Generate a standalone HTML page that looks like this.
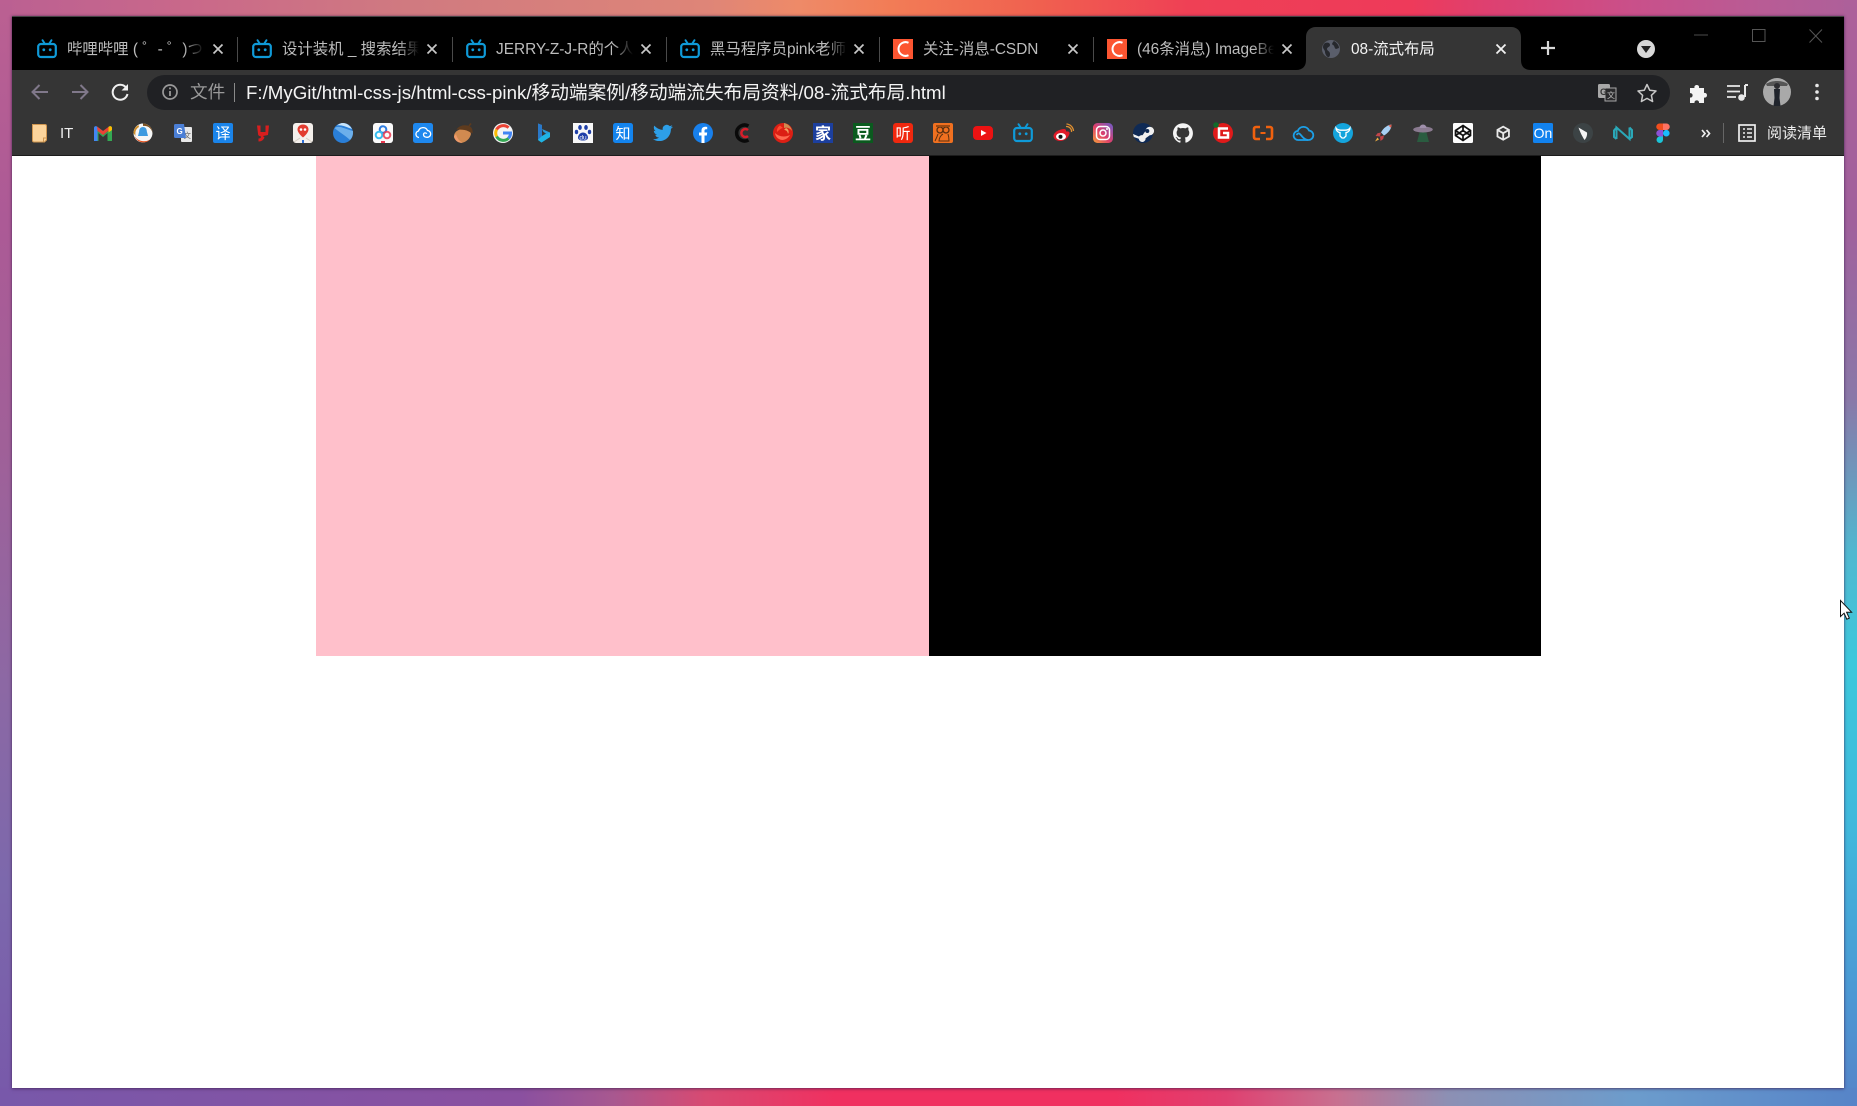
<!DOCTYPE html>
<html><head><meta charset="utf-8"><style>
html,body{margin:0;padding:0;width:1857px;height:1106px;overflow:hidden;background:#8a5aa5}
body{position:relative;font-family:"Liberation Sans","Noto Sans CJK SC",sans-serif}
.a{position:absolute}
#top{left:0;top:0;width:1857px;height:18px;background:linear-gradient(90deg,#bb6092 0,#c9688a 10%,#d07a80 22%,#de8578 38%,#ee8a68 43%,#f27c56 48%,#f0604f 56%,#ef4055 64%,#ee3a5a 76%,#de4070 80%,#c9508a 88%,#b85c95 95%,#ad609a 100%)}
#left{left:0;top:0;width:12px;height:1106px;background:linear-gradient(180deg,#bb6092 0,#ac5a96 20%,#a06098 40%,#8c68a4 62%,#7c68ac 80%,#7858aa 100%)}
#right{left:1844px;top:0;width:13px;height:1106px;background:linear-gradient(180deg,#ad609a 0,#a0609c 20%,#8a78a8 36%,#50b8d0 50%,#3cc8dc 60%,#40b8dc 75%,#4c98d4 90%,#5684c8 100%)}
#bot{left:0;top:1088px;width:1857px;height:18px;background:linear-gradient(90deg,#7858aa 0,#8a50a0 28%,#a85890 33%,#d84a72 38%,#f03060 45%,#f03060 60%,#e04070 66%,#c87090 72%,#8c90b4 78%,#6c9ccc 88%,#5684c8 100%)}
#win{left:12px;top:16px;width:1832px;height:1072px;background:#fff;box-shadow:0 1px 3px rgba(60,30,80,.55),0 0 2px rgba(60,30,80,.5)}
#tabs{left:12px;top:16px;width:1832px;height:54px;background:#000;border-top:1px solid #444;box-sizing:border-box}
#bar{left:12px;top:70px;width:1832px;height:85px;background:#353535}
#line{left:12px;top:155px;width:1832px;height:1px;background:#1c1c1c}
#omni{left:147px;top:75px;width:1523px;height:35px;border-radius:18px;background:#202124}
#pink{left:316px;top:156px;width:613px;height:500px;background:#ffc0cb}
#black{left:929px;top:156px;width:612px;height:500px;background:#000}
.t{top:39px;height:22px;line-height:22px;font-size:15.4px;color:#bdbdbd;white-space:nowrap;overflow:hidden;-webkit-mask-image:linear-gradient(90deg,#000 85%,transparent 100%);mask-image:linear-gradient(90deg,#000 85%,transparent 100%)}
.sep{top:37px;width:1px;height:25px;background:#4a4a4a}
#url{left:246px;top:80px;height:25px;line-height:25px;font-size:18.7px;color:#f4f4f4;white-space:nowrap}
#file{left:190px;top:80px;height:25px;line-height:25px;font-size:17.6px;color:#9a9a9a;white-space:nowrap}
#it{left:60px;top:123px;font-size:15px;line-height:22px;color:#eee}
#read{left:1767px;top:123px;font-size:15px;line-height:22px;color:#eee;white-space:nowrap}
svg{position:absolute;left:0;top:0;overflow:visible}
svg text{font-family:"Liberation Sans","Noto Sans CJK SC",sans-serif}
</style></head><body>
<div class="a" id="top"></div><div class="a" id="left"></div><div class="a" id="right"></div><div class="a" id="bot"></div>
<div class="a" id="win"></div>
<div class="a" id="tabs"></div>
<div class="a" id="bar"></div><div class="a" id="line"></div>
<svg class="a" style="left:1296px;top:27px" width="235" height="43" viewBox="0 0 235 43"><path d="M0 43C7 43 10 39 10 33V10C10 4 14 0 20 0H215C221 0 225 4 225 10V33C225 39 228 43 235 43Z" fill="#353535"/></svg>
<div class="a" id="omni"></div>
<div class="a" id="pink"></div><div class="a" id="black"></div>

<div class="a t" style="left:67px;width:137px">哔哩哔哩 ( ゜- ゜)つロ 干杯</div>
<div class="a t" style="left:282px;width:137px">设计装机 _ 搜索结果</div>
<div class="a t" style="left:496px;width:137px">JERRY-Z-J-R的个人空间</div>
<div class="a t" style="left:710px;width:137px">黑马程序员pink老师</div>
<div class="a t" style="left:923px;width:137px;-webkit-mask-image:none;mask-image:none">关注-消息-CSDN</div>
<div class="a t" style="left:1137px;width:137px">(46条消息) ImageBed</div>
<div class="a t" style="left:1351px;width:137px;color:#f4f4f4;-webkit-mask-image:none;mask-image:none">08-流式布局</div>
<div class="a sep" style="left:237px"></div><div class="a sep" style="left:452px"></div><div class="a sep" style="left:666px"></div><div class="a sep" style="left:879px"></div><div class="a sep" style="left:1093px"></div>

<div class="a" id="file">文件</div>
<div class="a" style="left:234px;top:83px;width:1px;height:19px;background:#8a8a8a"></div>
<div class="a" id="url">F:/MyGit/html-css-js/html-css-pink/移动端案例/移动端流失布局资料/08-流式布局.html</div>
<div class="a" id="it">IT</div>
<div class="a" id="read">阅读清单</div>

<svg width="1857" height="1106" viewBox="0 0 1857 1106">
<defs>
<g id="bili"><rect x="1.2" y="5" width="17.6" height="13" rx="2.8" fill="none" stroke="#0f9ad8" stroke-width="2.2"/><path d="M5.5 1.2 8 5M14.5 1.2 12 5" stroke="#0f9ad8" stroke-width="1.9" stroke-linecap="round"/><circle cx="6.8" cy="10.8" r="1.4" fill="#0f9ad8"/><circle cx="13.2" cy="10.8" r="1.4" fill="#0f9ad8"/></g>
<g id="csdn"><rect width="20" height="20" fill="#fc5531"/><path d="M15.5 3.800A7 7 0 0 0 5.500 10a7 7 0 0 0 10 6.200" fill="none" stroke="#fff" stroke-width="2"/></g>
<g id="x"><path d="M-4.5-4.500 4.500 4.500M4.500-4.500-4.500 4.500" stroke="#c8c8c8" stroke-width="1.700" fill="none"/></g>
</defs>
<use href="#bili" x="37" y="39"/><use href="#bili" x="252" y="39"/><use href="#bili" x="466" y="39"/><use href="#bili" x="680" y="39"/>
<use href="#csdn" x="893" y="39"/><use href="#csdn" x="1107" y="39"/>
<use href="#x" x="218" y="49"/><use href="#x" x="432" y="49"/><use href="#x" x="646" y="49"/><use href="#x" x="859" y="49"/><use href="#x" x="1073" y="49"/><use href="#x" x="1287" y="49"/>
<path d="M1496.500 44.500 1505.500 53.500M1505.500 44.500 1496.500 53.500" stroke="#f2f2f2" stroke-width="1.800"/>
<circle cx="1331" cy="49" r="9" fill="#5a5e6b"/><path d="M1325 43c3-1 5 0 5 2s-3 2-3 4 3 2 3 5-1 3-2 3-3-3-3-5-2-3-2-5 1-3 2-4zM1334 41c2 1 5 4 5 7l-3 1c-2-1-1-3-3-4s0-3 1-4z" fill="#26282d"/>
<path d="M1548 41v14M1541 48h14" stroke="#d8d8d8" stroke-width="2.200"/>
<circle cx="1646" cy="49" r="9" fill="#d8d8d8"/><path d="M1641 46h10l-5 7z" fill="#222"/>
<path d="M1694 35h14" stroke="#4c4c4c" stroke-width="1"/>
<rect x="1752.500" y="29.500" width="12.500" height="12" fill="none" stroke="#555" stroke-width="1"/>
<path d="M1809.500 29.500 1822 42.500M1822 29.500 1809.500 42.500" stroke="#555" stroke-width="1" fill="none"/>
<path d="M48 92H33M39.500 85 32.500 92l7 7" fill="none" stroke="#80788a" stroke-width="2"/>
<path d="M72 92H87M80.500 85l7 7-7 7" fill="none" stroke="#80788a" stroke-width="2"/>
<path d="M126 87.500A7.500 7.500 0 1 0 127.500 94" fill="none" stroke="#f0f0f0" stroke-width="2"/><path d="M121.500 90.500H128V84z" fill="#f0f0f0"/>
<circle cx="170" cy="92" r="7" fill="none" stroke="#9a9a9a" stroke-width="1.700"/><path d="M170 91v5M170 87.500v1.800" stroke="#9a9a9a" stroke-width="1.800"/>
<rect x="1598" y="84" width="12" height="14" rx="1.500" fill="#a8a8a8"/><rect x="1605" y="88" width="11" height="13" fill="#2a2a2c" stroke="#a8a8a8" stroke-width="1"/><text x="1600" y="95" font-size="9" font-weight="700" fill="#333">G</text><text x="1607" y="98" font-size="8" fill="#bbb">文</text>
<path d="M1647 84.500l2.700 5.700 6.300.8-4.600 4.300 1.200 6.200-5.600-3.100-5.600 3.100 1.200-6.200-4.600-4.300 6.300-.8z" fill="none" stroke="#c8c8c8" stroke-width="1.500" stroke-linejoin="round"/>
<path d="M1690 88h4.500c-1-4 5.500-4 4.500 0h5v5c4-1 4 5.500 0 4.500v5.500h-5c.6-3.500-5-3.500-4.500 0H1690v-5.500c3.500.8 3.500-5 0-4.300z" fill="#f4f4f4"/>
<path d="M1727 86h13M1727 91.500h13M1727 97h9" stroke="#e8e8e8" stroke-width="1.800"/><path d="M1745 85v12" stroke="#e8e8e8" stroke-width="2"/><path d="M1745 85h3" stroke="#e8e8e8" stroke-width="2"/><circle cx="1741.500" cy="97.500" r="3.300" fill="#e8e8e8"/>
<circle cx="1777" cy="92" r="14" fill="#a9a9a9"/><path d="M1766 84c6-4 16-4 22 0l-1 2h-20z" fill="#555"/><circle cx="1777" cy="86" r="3" fill="#2c2c30"/><path d="M1774 89h6l-.5 9 1 8h-7l1-8z" fill="#20242c"/>
<circle cx="1817" cy="85.500" r="1.800" fill="#e8e8e8"/><circle cx="1817" cy="92" r="1.800" fill="#e8e8e8"/><circle cx="1817" cy="98.500" r="1.800" fill="#e8e8e8"/>

<path d="M32.500 124.500h12.500a1.500 1.500 0 0 1 1.500 1.500v14l-2 2H34a1.500 1.500 0 0 1-1.500-1.500z" fill="#fcd49b" stroke="#cf9650" stroke-width="1"/><path d="M43.500 142v-4h3.500" fill="none" stroke="#cf9650"/>
<g transform="translate(93 123)"><path d="M2 18V6l8 6 8-6v12h-3.500V10L10 14 5.500 10v8z" fill="#34a853"/><path d="M1 5v13h3.500V7.500L10 12V8L4 3.500C2.500 2.500 1 3.500 1 5z" fill="#4285f4"/><path d="M4 3.500 10 8l6-4.500 3 1.500L10 12 4.500 8z" fill="#ea4335"/><path d="M15.500 18H19V5c0-1.500-1.500-2.500-3-1.500l-.5.500z" fill="#34a853"/><path d="M16 3.500c1.500-1 3 0 3 1.500v2l-3.500 2.500V4z" fill="#fbbc04"/></g>
<g transform="translate(133 123)"><circle cx="10" cy="10" r="9.500" fill="#f6f6f6"/><path d="M10 .5a9.500 9.500 0 0 1 9.500 9.500c-1-5-5-7.500-9.500-7z" fill="#7a5020"/><path d="M1.500 13c3 5 10 7 15.500 3.500-3 4-12.500 4.500-15.500-3.500z" fill="#e8501a"/><path d="M10 4c-2.500 0-3.800 2-3.800 4.200L5 13h10l-1.200-4.800C13.800 6 12.500 4 10 4z" fill="#3d9ae0"/><path d="M.5 10a9.500 9.500 0 0 1 5-8L6 4C3 6 2 8 2.500 13z" fill="#d0902e"/></g>
<g transform="translate(173 123)"><rect x="8" y="4" width="11" height="15" rx="1" fill="#e8e8e8"/><text x="10.500" y="15" font-size="7.500" fill="#666">文</text><path d="M1 2.500A1.500 1.500 0 0 1 2.500 1H11l2 14H2.500A1.500 1.500 0 0 1 1 13.500z" fill="#4b7fd6"/><text x="3.500" y="11" font-size="8" font-weight="700" fill="#fff">G</text></g>
<g transform="translate(213 123)"><rect width="20" height="20" rx="2" fill="#1a84ea"/><text x="10" y="15.500" text-anchor="middle" font-size="15" fill="#fff">译</text></g>
<g transform="translate(253 123)"><path d="M4 2.500h3.500v6.500h5V2.500H16L15 12l-5 1 1.500 1.500c-1 2.500-3 4-6 4v-3c1.500 0 2.500-.500 2.500-2-2.500-.500-3-1.500-3-3z" fill="#d81e1e"/></g>
<g transform="translate(293 123)"><rect width="20" height="20" rx="3" fill="#f4f0ec"/><path d="M10 1.500c-3.300 0-5.500 2.300-5.500 5 0 3.500 5.500 8 5.500 8s5.500-4.500 5.500-8c0-2.700-2.200-5-5.500-5z" fill="#e23c30"/><circle cx="8" cy="6.500" r="1.300" fill="#fff"/><circle cx="12" cy="6.500" r="1.300" fill="#fff"/><path d="M9 17h2v3H9z" fill="#2a6dd8"/><path d="M1 19l6-4M19 19l-6-4" stroke="#d4cec4"/></g>
<g transform="translate(333 123)"><circle cx="10" cy="10" r="10" fill="#2a7fd8"/><path d="M1.500 5C6 2 12 6 20 8c.3 4-1 7-3 9-4-4-11-8-15.500-12z" fill="#7dbcf0" opacity=".8"/><path d="M4 2.500c5-1 10 2 15 3.500C17 2.500 13.500 0 10 0 7.800 0 5.500 1 4 2.500z" fill="#c8e4fa"/></g>
<g transform="translate(373 123)"><rect width="20" height="20" rx="3" fill="#fafafa"/><circle cx="10" cy="6.500" r="3.300" fill="none" stroke="#2f7de0" stroke-width="2"/><circle cx="6" cy="12" r="3.300" fill="none" stroke="#36bdf0" stroke-width="2"/><circle cx="14" cy="12" r="3.300" fill="none" stroke="#e8384f" stroke-width="2" opacity=".85"/><path d="M8 18h4v2H8z" fill="#e8384f"/></g>
<g transform="translate(413 123)"><rect width="20" height="20" rx="2.500" fill="#1e88ee"/><path d="M6 14.500a3.300 3.300 0 0 1-.5-6.500 4.800 4.800 0 0 1 9-.5 3.400 3.400 0 0 1-.5 6.800c-2.500 0-3.500-1-3.500-3a1.700 1.700 0 0 1 3.200-.5" fill="none" stroke="#fff" stroke-width="1.300"/></g>
<g transform="translate(453 123)"><path d="M9 6c-4 .5-7.500 3-8 6.500-.4 3 2.500 6.500 7 7.500 5-.5 9-4.500 10-9-.5-3-5-5.500-9-5z" fill="#d08a50"/><path d="M3 11c1 4 3 7 6.500 8.500-4.500 1-8-2.500-8.500-6z" fill="#ee9a6a"/><path d="M3.500 6.500C6 2.500 12 1 17 3.500c2 1 3 4 2.500 7-3-1.500-5-3-8-3.500-3-.3-5.500-.5-8-.5z" fill="#5e3b1e"/><path d="M16 3l2-2.500" stroke="#5e3b1e" stroke-width="1.500"/></g>
<g transform="translate(493 123)"><circle cx="10" cy="10" r="10" fill="#f4f4f4"/><path d="M15.500 4.700A7.700 7.700 0 0 0 3.600 6.500" fill="none" stroke="#ea4335" stroke-width="3"/><path d="M3.600 6.500a7.700 7.700 0 0 0 0 7" fill="none" stroke="#fbbc05" stroke-width="3"/><path d="M3.600 13.500A7.700 7.700 0 0 0 15.500 15.300" fill="none" stroke="#34a853" stroke-width="3"/><path d="M15.500 15.300A7.700 7.700 0 0 0 17.500 10H10" fill="none" stroke="#4285f4" stroke-width="3"/></g>
<g transform="translate(533 123)"><path d="M5 .5l4 1.500v11l4-2.500-2.500-1.500L9 6l8 3.500v4.500L8.500 19.500 5 17z" fill="#2a9ad8"/><path d="M5 .5l4 1.500v11l-4 4z" fill="#2a78c8"/><path d="M9 13l8-3.500v4.500L8.500 19.500 5 17z" fill="#1fb4e4"/></g>
<g transform="translate(573 123)"><rect width="20" height="20" fill="#f8f8f8"/><path d="M10 9.500c-3 0-5 3-5 5 0 2 2 3 5 3s5-1 5-3c0-2-2-5-5-5z" fill="#1f3fa8"/><ellipse cx="7" cy="4.500" rx="1.800" ry="2.500" fill="#1f3fa8"/><ellipse cx="13" cy="4.500" rx="1.800" ry="2.500" fill="#1f3fa8"/><ellipse cx="3.500" cy="9" rx="1.700" ry="2.200" fill="#1f3fa8"/><ellipse cx="16.500" cy="9" rx="1.700" ry="2.200" fill="#1f3fa8"/><text x="10" y="16.500" text-anchor="middle" font-size="6.500" fill="#fff">du</text></g>
<g transform="translate(613 123)"><rect width="20" height="20" rx="2.500" fill="#1384ee"/><text x="10" y="15.500" text-anchor="middle" font-size="15" fill="#fff">知</text></g>
<g transform="translate(653 123) scale(.83)"><path d="M23.953 4.570a10 10 0 0 1-2.825.775 4.958 4.958 0 0 0 2.163-2.723c-.951.555-2.005.959-3.127 1.184a4.920 4.920 0 0 0-8.384 4.482C7.690 8.095 4.067 6.130 1.640 3.162a4.822 4.822 0 0 0-.666 2.475c0 1.710.870 3.213 2.188 4.096a4.904 4.904 0 0 1-2.228-.616v.060a4.923 4.923 0 0 0 3.946 4.827 4.996 4.996 0 0 1-2.212.085 4.936 4.936 0 0 0 4.604 3.417 9.867 9.867 0 0 1-6.102 2.105c-.390 0-.779-.023-1.170-.067a13.995 13.995 0 0 0 7.557 2.209c9.053 0 13.998-7.496 13.998-13.985 0-.210 0-.420-.015-.630A9.935 9.935 0 0 0 24 4.590z" fill="#2d9fe8"/></g>
<g transform="translate(693 123)"><circle cx="10" cy="10" r="10" fill="#1880ec"/><path d="M8.500 20v-7.500H6V9.500h2.500V7.500c0-2.500 1.500-3.800 3.700-3.800 1 0 2 .15 2 .15v2.400H13c-1.200 0-1.500.7-1.500 1.500V9.500h2.700l-.4 3h-2.300V20z" fill="#fff"/></g>
<g transform="translate(733 123)"><path d="M15.500 3A8 8 0 1 0 15.500 17" fill="none" stroke="#0a0a0a" stroke-width="3.500"/><path d="M15 7A4 4 0 1 0 15 13" fill="none" stroke="#d81e2a" stroke-width="2.500"/></g>
<g transform="translate(773 123)"><circle cx="10" cy="10" r="10" fill="#dc1f14"/><path d="M11 0a10 10 0 0 1 8 8c-2-3-5-4-8-3z" fill="#d08a50"/><path d="M13 5a4 4 0 0 1 2 6c-.500-3-2-4-4-4z" fill="#f0a060"/><path d="M2 10c3 3 9 5 15 2-3 5-8 6-11 4-2-1-3.500-3-4-6z" fill="#ff6a50"/><path d="M7 2.500C4.500 4 3.500 7 4 9c2-2 3.500-3.500 6-4z" fill="#ff4a30"/></g>
<g transform="translate(813 123)"><rect width="20" height="20" fill="#1c3f9e"/><text x="10" y="16" text-anchor="middle" font-size="16" font-weight="700" fill="#fff">家</text></g>
<g transform="translate(853 123)"><rect width="20" height="20" fill="#0a5a1e"/><text x="10" y="16" text-anchor="middle" font-size="16" font-weight="700" fill="#fff">豆</text></g>
<g transform="translate(893 123)"><rect width="20" height="20" rx="3" fill="#f0280e"/><text x="10" y="15.500" text-anchor="middle" font-size="15" fill="#fff">听</text></g>
<g transform="translate(933 123)"><rect width="20" height="20" rx="2" fill="#f07020"/><circle cx="7" cy="7" r="3" fill="none" stroke="#5a3010" stroke-width="1.300"/><circle cx="13" cy="7" r="3" fill="none" stroke="#5a3010" stroke-width="1.300"/><path d="M5 11c-1 3-2 5-3 7M15 11c1 3 1 5 1 7H6c0-3 2-6 4-7" fill="none" stroke="#5a3010"/><path d="M3 3h14" stroke="#a04a10" stroke-width="2"/></g>
<g transform="translate(973 123)"><rect y="3" width="20" height="14" rx="4" fill="#ec1212"/><path d="M8 7l5.500 3L8 13z" fill="#fff"/></g>
<use href="#bili" x="1013" y="123"/>
<g transform="translate(1053 123)"><path d="M8 6.500c3.500-1 5.500-.500 5 2 3-.700 4.500 1 3 3.500-1.200 3.500-5 6-9 6-3.500 0-6.500-2-6.500-5 0-2.500 3-5.500 7.500-6.500z" fill="#e01a28"/><ellipse cx="8" cy="13.500" rx="5" ry="3.500" fill="#fff"/><circle cx="7.500" cy="13.700" r="2" fill="#111"/><path d="M13 3.500A5 5 0 0 1 18.500 9M13.500 1A7.500 7.500 0 0 1 20.500 8" fill="none" stroke="#e09030" stroke-width="1.300"/></g>
<g transform="translate(1093 123)"><defs><linearGradient id="ig" x1="0" y1="1" x2="1" y2="0"><stop offset="0" stop-color="#f6a03a"/><stop offset=".45" stop-color="#e0406a"/><stop offset="1" stop-color="#6a5ccc"/></linearGradient></defs><rect width="20" height="20" rx="4.500" fill="url(#ig)"/><rect x="3.500" y="3.500" width="13" height="13" rx="3.500" fill="none" stroke="#fff" stroke-width="1.500"/><circle cx="10" cy="10" r="3" fill="none" stroke="#fff" stroke-width="1.500"/><circle cx="14" cy="6" r="1" fill="#fff"/></g>
<g transform="translate(1133 123)"><circle cx="10" cy="10" r="10" fill="#0f2a55"/><path d="M0 11l6 2.500c1-1 2-1.500 3.500-1.300l3-4.200a4.300 4.300 0 1 1 4.300 4.300l-4.200 3a3.400 3.400 0 0 1-6.800.500L.800 14z" fill="#f0f0f0"/><circle cx="14.300" cy="8" r="2" fill="#0f2a55"/></g>
<g transform="translate(1173 123) scale(.83)"><path d="M12 .297c-6.630 0-12 5.373-12 12 0 5.303 3.438 9.800 8.205 11.385.600.113.820-.258.820-.577 0-.285-.010-1.040-.015-2.040-3.338.724-4.042-1.610-4.042-1.610C4.422 18.070 3.633 17.700 3.633 17.700c-1.087-.744.084-.729.084-.729 1.205.084 1.838 1.236 1.838 1.236 1.070 1.835 2.809 1.305 3.495.998.108-.776.417-1.305.760-1.605-2.665-.300-5.466-1.332-5.466-5.930 0-1.310.465-2.380 1.235-3.220-.135-.303-.540-1.523.105-3.176 0 0 1.005-.322 3.300 1.230.960-.267 1.980-.399 3-.405 1.020.006 2.040.138 3 .405 2.280-1.552 3.285-1.230 3.285-1.230.645 1.653.240 2.873.120 3.176.765.840 1.230 1.910 1.230 3.220 0 4.610-2.805 5.625-5.475 5.920.420.360.810 1.096.810 2.220 0 1.606-.015 2.896-.015 3.286 0 .315.210.690.825.570C20.565 22.092 24 17.592 24 12.297c0-6.627-5.373-12-12-12" fill="#f4f4f4"/></g>
<g transform="translate(1213 123)"><circle cx="10" cy="10" r="10" fill="#e01a1a"/><circle cx="3" cy="2" r="2.800" fill="#0e6a2a"/><path d="M15 5.500H6v9h9v-4.500h-5" fill="none" stroke="#fff" stroke-width="2.500"/></g>
<g transform="translate(1253 123)"><path d="M7 4H3a2 2 0 0 0-2 2v8a2 2 0 0 0 2 2h4M13 4h4a2 2 0 0 1 2 2v8a2 2 0 0 1-2 2h-4" fill="none" stroke="#f0610e" stroke-width="2.600"/><path d="M7.500 10h5" stroke="#f0610e" stroke-width="2"/></g>
<g transform="translate(1293 123)"><path d="M5.500 17a4.500 4.500 0 0 1-.7-9A6 6 0 0 1 16 7.500 4.700 4.700 0 0 1 15 17c-3 0-5-2.200-7-4.800S5 10 3.500 12" fill="none" stroke="#1ca0e8" stroke-width="1.800"/><path d="M5.500 17H15" stroke="#1ca0e8" stroke-width="1.800"/></g>
<g transform="translate(1333 123)"><circle cx="10" cy="10" r="10" fill="#14a4dc"/><path d="M3 5c0 2.500 2 4.500 4 4.500V13l2 2h2l2-2V9.500c2 0 4-2 4-4.500-1 1.500-3 2.200-5 2.200H8C6 7.200 4 6.500 3 5z" fill="none" stroke="#fff" stroke-width="1.300"/></g>
<g transform="translate(1373 123)"><path d="M18.500 1.500c-4.500.5-8.500 4-10.500 8l3 3c4-2.500 7.500-6 7.500-11z" fill="#a8d0f4"/><path d="M15.500 2.500l2.500 2.500.7-3.500z" fill="#e05a4a"/><path d="M8 9.500l-3.500.8L2.500 13l4.500.5zM11 12.500l-.8 3.500-2.700 2-.5-4.500z" fill="#c0454a"/><path d="M4.500 14.500l-2.500 4 4-2z" fill="#f0b040"/></g>
<g transform="translate(1413 123)"><ellipse cx="10" cy="6.500" rx="9.800" ry="3" fill="#8a7a90"/><path d="M6.500 5a3.500 3.500 0 0 1 7 0z" fill="#a090ac"/><path d="M6.500 9.500h7L16 19H4z" fill="#2a5c40"/></g>
<g transform="translate(1453 123)"><rect width="20" height="20" rx="1.500" fill="#fdfdfd"/><path d="M10 2.500 17.500 7.500v5L10 17.500 2.500 12.500v-5zM10 7.500l-3.700 2.500L10 12.500 13.700 10zM10 2.500v5M10 12.500v5M2.500 7.500l3.800 2.500M17.500 7.500 13.700 10M2.500 12.500 6.300 10M17.500 12.500 13.700 10" fill="none" stroke="#111" stroke-width="1.700"/></g>
<g transform="translate(1495 125) scale(.82)"><path d="M10 2 17 6v8l-7 4-7-4V6zM3 6l7 4 7-4M10 10v8" fill="none" stroke="#e8e8e8" stroke-width="2.200"/></g>
<g transform="translate(1533 123)"><rect width="20" height="20" rx="1.500" fill="#1282ee"/><text x="10" y="15" text-anchor="middle" font-size="14" fill="#fff">On</text></g>
<g transform="translate(1573 123)"><circle cx="10" cy="10" r="10" fill="#3c4345"/><path d="M5.500 4.500 14 9.500c.5 3-1 6-2.500 7.500C9.500 14 7 9 5.500 4.500z" fill="#f4f4f4"/></g>
<g transform="translate(1613 123)"><path d="M3.500 16V4.500L16.500 16V4.500M3.500 4.500 1 7.500v6.500L3.500 16M16.500 4.500 19 7v7l-2.500 2" fill="none" stroke="#2aa8b8" stroke-width="2"/></g>
<g transform="translate(1656 123)"><path d="M3.500 .5H7V7H3.500a3.250 3.250 0 0 1 0-6.500z" fill="#f24e1e"/><path d="M7 .5h3.500a3.250 3.250 0 0 1 0 6.500H7z" fill="#ff7262"/><path d="M7 7H3.500a3.250 3.250 0 0 0 0 6.500H7z" fill="#a259ff" opacity=".8"/><circle cx="10.300" cy="10.200" r="3.300" fill="#1abcfe"/><path d="M7 13.500H3.500a3.250 3.250 0 1 0 3.500 3.250z" fill="#1bc4d8"/></g>
<path d="M1702 130l3 3.500-3 3.500M1706.500 130l3 3.500-3 3.500" fill="none" stroke="#eee" stroke-width="1.700"/>
<path d="M1723.500 123v20" stroke="#666" stroke-width="1"/>
<rect x="1739" y="125" width="16" height="16" fill="none" stroke="#eee" stroke-width="1.700"/><path d="M1743 129h2M1747 129h5M1743 133h2M1747 133h5M1743 137h2M1747 137h5" stroke="#eee" stroke-width="1.500"/>
<path d="M1840.500 600.500v16l3.600-3.300 2.700 6 2.500-1.100-2.700-5.900h5z" fill="#fff" stroke="#111" stroke-width="1"/>
</svg>
</body></html>
